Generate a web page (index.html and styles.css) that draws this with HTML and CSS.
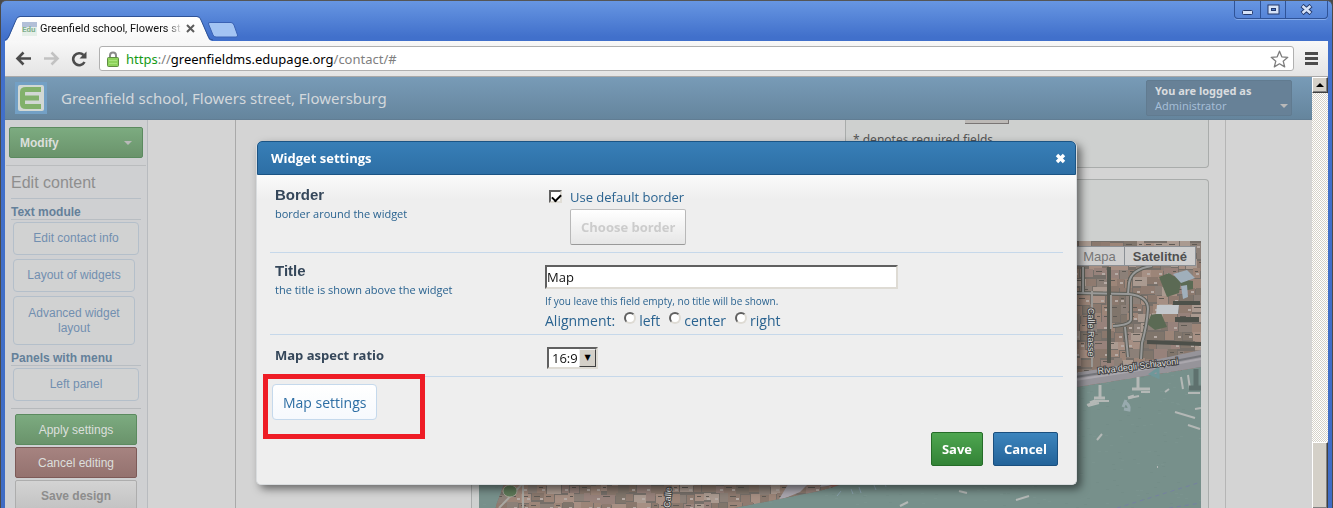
FILE: index.html
```html
<!DOCTYPE html>
<html lang="en">
<head>
    <meta charset="UTF-8">
    <meta name="viewport" content="width=device-width, initial-scale=1.0">
    <title>Greenfield school, Flowers street, Flowersburg</title>
    <link rel="stylesheet" href="styles.css">
</head>
<body>
    <div class="window">
        <div class="titlebar">
            <div class="tab">
                <svg class="tab-shape" viewBox="0 0 208 25" preserveAspectRatio="none">
                    <defs>
                        <linearGradient id="tabFill" x1="0" y1="0" x2="0" y2="1">
                            <stop offset="0" stop-color="#ffffff"/>
                            <stop offset="1" stop-color="#f7f7f7"/>
                        </linearGradient>
                    </defs>
                    <path d="M0 25 Q3 24 4 21 L11 4 Q12 1 15 1 H192 Q195 1 196 4 L203 21 Q204 25 208 25 Z" fill="url(#tabFill)"/>
                    <path d="M0 24 Q3 23 4 20 L11 4 Q12 .5 15 .5 H192 Q195 .5 196 4 L203 20 Q204 24 208 24" fill="none" stroke="#2f5397" stroke-width="1"/>
                </svg>
                <span class="favicon">Edu</span>
                <span class="tab-title">Greenfield school, Flowers st</span>
                <button class="tab-close" aria-label="Close tab">
                    <svg width="9" height="9" viewBox="0 0 9 9"><path d="M1 1l7 7M8 1l-7 7" stroke="#5c5c5c" stroke-width="2"/></svg>
                </button>
            </div>
            <button class="new-tab" aria-label="New tab">
                <svg width="32" height="16" viewBox="0 0 32 16"><path d="M3 .5H24Q26 .5 27 3L30.500 13Q31 15 29 15H9Q7 15 6 13L1.500 2Q1 .5 3 .5Z" fill="#a3c4f3" stroke="#3a62b4"/></svg>
            </button>
            <div class="window-buttons">
                <button aria-label="Minimize"><svg width="13" height="11" viewBox="0 0 13 11"><rect x="1.500" y="6.500" width="10" height="4" rx="1" fill="#d6e3f8" stroke="#24396b"/></svg></button>
                <button aria-label="Maximize"><svg width="13" height="11" viewBox="0 0 13 11"><rect x="1" y="1" width="11" height="9" fill="#d6e3f8" stroke="#24396b"/><rect x="4.500" y="4.500" width="4" height="2" fill="#4876cc" stroke="#24396b"/></svg></button>
                <button class="wide" aria-label="Close"><svg width="13" height="11" viewBox="0 0 13 11"><path d="M2 1.500l9 8M11 1.500l-9 8" stroke="#24396b" stroke-width="4.500"/><path d="M2.500 2l8 7M10.500 2l-8 7" stroke="#d6e3f8" stroke-width="2.500"/></svg></button>
            </div>
        </div>

        <div class="toolbar">
            <button class="nav-btn" aria-label="Back"><svg width="17" height="15" viewBox="0 0 17 15"><path d="M16 7.500H3M8.500 1.500L2.500 7.500l6 6" fill="none" stroke="#4c4c4c" stroke-width="2.600"/></svg></button>
            <button class="nav-btn" aria-label="Forward"><svg width="17" height="15" viewBox="0 0 17 15"><path d="M1 7.500h13M8.500 1.500l6 6-6 6" fill="none" stroke="#c2c2c2" stroke-width="2.600"/></svg></button>
            <button class="nav-btn" aria-label="Reload"><svg width="17" height="16" viewBox="0 0 17 16"><path d="M13.500 11A6 6 0 1 1 12.500 4" fill="none" stroke="#4c4c4c" stroke-width="2.600"/><path d="M15.500 .5V7.500H8.500Z" fill="#4c4c4c"/></svg></button>
            <div class="address">
                <svg class="lock" width="12" height="16" viewBox="0 0 12 16"><path d="M3 7V4.500a3 3 0 0 1 6 0V7" fill="none" stroke="#8a8a8a" stroke-width="2"/><rect x=".5" y="6.500" width="11" height="9" rx="1" fill="#8ed35c" stroke="#5f8d42"/><path d="M2 9.500h8M2 12.500h8" stroke="#a8e37c"/></svg>
                <span class="url"><span class="scheme">https</span><span class="dim">://</span>greenfieldms.edupage.org<span class="dim">/contact/#</span></span>
                <svg width="19" height="18" viewBox="0 0 19 18"><path d="M9.500 1.200l2.300 5.600 6 .5-4.600 3.900 1.500 5.700-5.200-3.100-5.200 3.100 1.500-5.700L1.200 7.300l6-.5z" fill="#fff" stroke="#7d7d7d" stroke-width="1.300" stroke-linejoin="round"/></svg>
            </div>
            <button class="menu-btn" aria-label="Menu"><svg width="13" height="13" viewBox="0 0 13 13"><path d="M0 1.500h13M0 6.500h13M0 11.500h13" stroke="#4c4c4c" stroke-width="3"/></svg></button>
        </div>

        <div class="viewport">
            <div class="page">
                <div class="header">
                    <svg class="logo" width="32" height="32" viewBox="0 0 32 32"><rect width="32" height="32" fill="#73a0c5"/><rect x="3" y="3" width="26" height="26" rx="2" fill="#d2d8d4"/><path d="M26 7.500H11Q7.500 7.500 7.500 10V22Q7.500 24.500 11 24.500H26M8 16H24" fill="none" stroke="#82b16b" stroke-width="5"/></svg>
                    <h1>Greenfield school, Flowers street, Flowersburg</h1>
                    <div class="login-box">
                        <strong>You are logged as</strong>
                        <span>Administrator</span>
                        <i class="caret"></i>
                    </div>
                </div>

                <div class="columns">
                    <div class="sidebar">
                        <button class="side-btn modify">Modify <i class="caret"></i></button>
                        <div class="side-panel">
                            <h2>Edit content</h2>
                            <h3>Text module</h3>
                            <button class="side-link full">Edit contact info</button>
                            <button class="side-link">Layout of widgets</button>
                            <button class="side-link tall">Advanced widget layout</button>
                            <h3>Panels with menu</h3>
                            <button class="side-link full">Left panel</button>
                            <div class="side-actions">
                                <button class="side-btn green">Apply settings</button>
                                <button class="side-btn red">Cancel editing</button>
                                <button class="side-btn grey">Save design</button>
                            </div>
                        </div>
                    </div>

                    <div class="main">
                        <div class="content">
                            <div class="card form-card">
                                <span class="field-end"></span>
                                <p>* denotes required fields</p>
                            </div>
                            <div class="card map-card">
                                <div class="map">
                                    <svg class="map-image" viewBox="0 0 722 330" preserveAspectRatio="xMaxYMin slice">
                                        <defs>
                                            <clipPath id="land">
                                                <path d="M8 0H722V126L598 146L470 195L372 241L340 250L250 268L180 330H0L18 262L30 230Z"/>
                                            </clipPath>
                                        </defs>
                                        <rect width="722" height="330" fill="#77908b"/>
                                        <g id="ripples"></g>
                                        <g clip-path="url(#land)">
                                            <rect width="722" height="330" fill="#766f69"/>
                                            <g id="roofs"></g>
                                            <path d="M20 267L48 238M44 238V267" stroke="#a9a8a2" stroke-width="2" fill="none"/>
                                            <ellipse cx="31" cy="250" rx="7" ry="6" fill="#5f7a59" stroke="#a3a496"/>
                                            <path d="M311 240l20 1-10 10-22 9zM345 238l18-2-8 8-14 2z" fill="#aaa6ae"/>
                                            <path d="M346 242l12-4 10 2-14 6z" fill="#9b6258"/>
                                            <g fill="#5b6a54">
                                                <path d="M680 36l10-4 12 8-2 12-12 4zM672 74l10-2 6 14-12 3-8-6zM700 38l14 2v8l-10 2z"/>
                                                <path d="M694 60h27v4h-27zM696 76h24v5h-24z" fill="#4d514a"/>
                                            </g>
                                            <path d="M678 64h22l-1 9h-22z" fill="#c3c7cb"/>
                                            <path d="M694 33l14-4 8 8-14 5zM702 45l6-1 1 12-5 2z" fill="#a0afbb"/>
                                            <g fill="none" stroke-linejoin="round">
                                                <path d="M598 52L650 53Q669 55 669 68Q668 84 663 102L662 118M673 25Q652 28 650 42L649 53M652 55L652 78Q652 84 634 85M604 26V52M646 86L649 116" stroke="#5d5e57" stroke-width="4"/>
                                                <path d="M598 52L650 53Q669 55 669 68Q668 84 663 102L662 118M673 25Q652 28 650 42L649 53M652 55L652 78Q652 84 634 85M604 26V52M646 86L649 116" stroke="#999a99" stroke-width="2"/>
                                                <path d="M630 26V122" stroke="#555850" stroke-width="4"/>
                                                <path d="M613 50V126M632 54V88" stroke="#9a9894" stroke-width="2"/>
                                                <path d="M668 101L722 103" stroke="#4c4f49" stroke-width="4"/>
                                            </g>
                                            <path d="M590 133L680 118L722 109V130L598 149Z" fill="#96949a"/>
                                            <path d="M590 137L680 123L722 115" fill="none" stroke="#74757a" stroke-width="2"/>
                                            <path d="M590 140L680 126L722 118" fill="none" stroke="#aaa7ad" stroke-width="2"/>
                                        </g>
                                        <g stroke="#b4b8b6" stroke-width="3" fill="none">
                                            <path d="M621 144V156M615 157h11M616 160l-5 2M659 136v11M653 148h18M655 155l-6 2"/>
                                            <path d="M614 160h16M662 151h9M609 165l11-3M650 157l10-2M702 136l2 12M709 134l2 14" stroke-width="2"/>
                                            <path d="M717 128v18M710 147h12" stroke="#5e716e" stroke-width="5"/>
                                            <path d="M686 151l4-3M709 152h12M709 184l12 4M716 168l6-1M696 171l20 6M618 199l5-6M608 164l12-4" stroke-width="2"/>
                                            <path d="M672 133l7-5v8z" stroke="#6f979a"/>
                                            <path d="M645 161q6 2 5 8l-5-1M647 159l-3 7" stroke="#98aaae"/>
                                            <path d="M537 259l13-4M421 265l8-4M480 250l8 2M678 226h1" stroke-width="2"/>
                                        </g>
                                        <g stroke="#8ba3b0" fill="none"><path d="M372 248l2 5M380 246l2 6M395 244l2 5M362 250l-4 5M406 242l1 4"/></g>
                                        <path d="M638 267L722 241M690 267L722 262" stroke="#7581a0" stroke-dasharray="4 4" fill="none"/>
                                        <g class="street">
                                            <text x="619" y="133" transform="rotate(-7 619 133)">Riva degli Schiavoni</text>
                                            <text x="609" y="67" transform="rotate(90 609 67)">Calle Rasse</text>
                                            <text x="191" y="267" transform="rotate(-85 191 267)">Calle</text>
                                        </g>
                                    </svg>
                                    <div class="map-types">
                                        <button>Mapa</button>
                                        <button class="active">Satelitné</button>
                                    </div>
                                </div>
                            </div>
                        </div>
                    </div>
                </div>
            </div>
            <div class="scrollbar">
                <button class="scroll-up" aria-label="Scroll up"></button>
                <div class="scroll-thumb"></div>
            </div>
        </div>
    </div>

    <div class="overlay">
        <div class="dialog" role="dialog" aria-labelledby="dialogTitle">
            <div class="dialog-title">
                <h2 id="dialogTitle">Widget settings</h2>
                <button class="dialog-close" aria-label="Close">
                    <svg width="11" height="11" viewBox="0 0 11 11"><path d="M2 2l7 7M9 2l-7 7" stroke="#fff" stroke-width="3.400"/></svg>
                </button>
            </div>
            <form class="dialog-body" onsubmit="return false">
                <div class="row">
                    <div class="row-label">
                        <h4>Border</h4>
                        <p>border around the widget</p>
                    </div>
                    <div class="row-field">
                        <div class="check-line">
                            <input type="checkbox" id="default-border" checked>
                            <label for="default-border">Use default border</label>
                        </div>
                        <button type="button" class="btn btn-disabled" disabled>Choose border</button>
                    </div>
                </div>
                <div class="row row-title">
                    <div class="row-label">
                        <h4><label for="widget-title">Title</label></h4>
                        <p>the title is shown above the widget</p>
                    </div>
                    <div class="row-field title-field">
                        <input type="text" id="widget-title" value="Map">
                        <small>If you leave this field empty, no title will be shown.</small>
                        <div class="align-line">
                            <span>Alignment:</span>
                            <input type="radio" name="align" id="align-left"><label for="align-left">left</label>
                            <input type="radio" name="align" id="align-center"><label for="align-center">center</label>
                            <input type="radio" name="align" id="align-right"><label for="align-right">right</label>
                        </div>
                    </div>
                </div>
                <div class="row">
                    <div class="row-label">
                        <h4 class="small"><label for="aspect">Map aspect ratio</label></h4>
                    </div>
                    <div class="row-field ratio-field">
                        <span class="select-box">
                            <select id="aspect"><option>16:9</option><option>4:3</option></select>
                        </span>
                    </div>
                </div>
                <div class="highlight">
                    <button type="button" class="btn btn-light">Map settings</button>
                </div>
                <div class="dialog-buttons">
                    <button type="submit" class="btn btn-save">Save</button>
                    <button type="button" class="btn btn-cancel">Cancel</button>
                </div>
            </form>
        </div>
    </div>

    <script src="map.js"></script>
</body>
</html>
```
FILE: styles.css
```css
* {
    margin: 0;
    padding: 0;
    box-sizing: border-box;
}

body {
    font-family: "Liberation Sans", Arial, sans-serif;
    font-size: 12px;
    background: #4a4a4a;
    overflow: hidden;
}

button,
input,
select {
    font: inherit;
}

button {
    border: none;
    background: none;
}

svg {
    display: block;
}

/* browser window */
.window {
    height: 100vh;
    display: flex;
    flex-direction: column;
    padding: 0 4px;
    background: linear-gradient(to bottom, #6796e2, #4170cb 36px, #3f6cc4);
    border-top: 1px solid #555;
    border-left: 1px solid #4a4a4a;
    border-right: 1px solid #4a4a4a;
    border-radius: 6px 6px 0 0;
}

.titlebar {
    height: 40px;
    display: flex;
    align-items: flex-end;
}

.tab {
    position: relative;
    width: 208px;
    height: 25px;
    display: flex;
    align-items: center;
    padding: 0 18px 0 17px;
    gap: 3px;
    font-family: Roboto, sans-serif;
    font-size: 11px;
}

.tab-shape {
    position: absolute;
    inset: 0;
    width: 100%;
    height: 100%;
}

.favicon {
    position: relative;
    width: 15px;
    height: 14px;
    background: linear-gradient(to bottom, #b3c0d8 5px, #e6efe9 5px);
    color: #7fae8c;
    font-size: 8px;
    font-weight: bold;
    line-height: 16px;
}

.tab-title {
    position: relative;
    flex: 1;
    overflow: hidden;
    white-space: nowrap;
    color: #111;
    mask-image: linear-gradient(to right, #000 88%, transparent);
}

.tab-close {
    position: relative;
}

.new-tab {
    margin: 0 0 3px -6px;
}

.window-buttons {
    align-self: flex-start;
    display: flex;
    margin-left: auto;
    border: 1px solid #2f5397;
    border-top: none;
    border-radius: 0 0 4px 4px;
    box-shadow: 0 1px 0 #86abea;
}

.window-buttons button {
    width: 25px;
    height: 17px;
    display: flex;
    align-items: center;
    justify-content: center;
    border-left: 1px solid #2f5397;
}

.window-buttons button:first-child {
    border-left: none;
}

.window-buttons .wide {
    width: 42px;
}

.toolbar {
    height: 36px;
    display: flex;
    align-items: center;
    gap: 11px;
    padding: 0 10px;
    background: linear-gradient(to bottom, #f8f8f8, #e4e4e4);
    border-bottom: 1px solid #a9a9a9;
}

.address {
    flex: 1;
    height: 25px;
    display: flex;
    align-items: center;
    gap: 7px;
    padding: 0 4px 0 7px;
    background: #fff;
    border: 1px solid #b0b0b0;
    border-radius: 3px;
}

.url {
    flex: 1;
    font-family: "Noto Sans", sans-serif;
    font-size: 13px;
    color: #000;
}

.scheme {
    color: #159a15;
}

.dim {
    color: #7f7f7f;
}

.viewport {
    flex: 1;
    min-height: 0;
    display: flex;
}

/* school page */
.page {
    flex: 1;
    display: flex;
    flex-direction: column;
    overflow: hidden;
    background: #d4d4d4;
}

.header {
    flex: none;
    height: 43px;
    display: flex;
    align-items: center;
    gap: 14px;
    padding: 0 20px 0 10px;
    background: linear-gradient(to bottom, #789bb7, #65859d);
    border-bottom: 1px solid #617d93;
}

.header h1 {
    flex: 1;
    font-family: "Noto Sans", sans-serif;
    font-size: 15px;
    font-weight: normal;
    color: #d3d8dc;
}

.login-box {
    position: relative;
    width: 146px;
    height: 36px;
    padding: 2px 8px;
    display: flex;
    flex-direction: column;
    background: #678197;
    border: 1px solid #617b90;
    border-radius: 2px;
    font-family: "Noto Sans", sans-serif;
    font-size: 11px;
    line-height: 15px;
    color: #a5bdd6;
}

.login-box strong {
    color: #d9dcdf;
}

.caret {
    border: 4px solid transparent;
    border-top-color: #b9b9b9;
    border-bottom: none;
}

.login-box .caret {
    position: absolute;
    right: 3px;
    bottom: 7px;
}

.columns {
    flex: 1;
    min-height: 0;
    display: flex;
}

.sidebar {
    flex: none;
    width: 143px;
    padding: 7px 1px 0 1px;
    background: #cfd0d2;
    border-right: 1px solid #b8bbbf;
}

.side-btn {
    display: block;
    width: 100%;
    height: 31px;
    border: 1px solid #5b8a5f;
    border-radius: 2px;
    background: linear-gradient(to bottom, #7cab80, #6a936b);
    color: #dcdfdc;
}

.modify {
    width: 134px;
    display: flex;
    align-items: center;
    justify-content: space-between;
    margin: 0 3px 7px;
    padding: 0 10px;
    font-weight: bold;
}

.side-panel {
    border-top: 1px solid #babcbe;
    padding: 0 5px;
}

.side-panel h2 {
    height: 33px;
    line-height: 33px;
    font-size: 16px;
    font-weight: normal;
    color: #8e8e8e;
    border-bottom: 1px solid #b6bec6;
}

.side-panel h3 {
    height: 21px;
    padding-top: 5px;
    line-height: 16px;
    font-size: 12px;
    color: #64809a;
    border-bottom: 1px solid #b8bdc2;
    margin-bottom: -2px;
}

.side-link {
    display: block;
    width: 122px;
    min-height: 33px;
    margin: 4px 2px 0;
    padding: 0 12px;
    line-height: 15px;
    color: #718fb0;
    background: #d1d2d2;
    border: 1px solid #b4bfca;
    border-radius: 4px;
}

.side-link.tall {
    min-height: 49px;
}

.side-link.full {
    width: 126px;
}

.side-actions {
    display: flex;
    flex-direction: column;
    gap: 2px;
    margin-top: 7px;
    padding: 5px 4px 0;
    border-top: 1px solid #b6b9bc;
}

.side-btn.red {
    border-color: #7d5a58;
    background: linear-gradient(to bottom, #a68380, #94726f);
}

.side-btn.grey {
    border-color: #adadad;
    background: linear-gradient(to bottom, #d3d3d3, #c2c2c2);
    color: #8d8d8d;
    font-weight: bold;
}

.main {
    flex: 1;
    min-width: 0;
    padding: 0 86px 0 87px;
}

.content {
    height: 100%;
    display: flex;
    flex-direction: column;
    align-items: flex-end;
    gap: 11px;
    padding-right: 16px;
    border-left: 1px solid #a9a9a9;
    border-right: 1px solid #b5b5b5;
    overflow: hidden;
}

.card {
    background: #ced0cf;
    border: 1px solid #a9acab;
    border-radius: 4px;
}

.form-card {
    flex: none;
    width: 364px;
    height: 48px;
    padding-left: 7px;
    border-top: none;
    border-radius: 0 0 4px 4px;
    color: #555;
}

.form-card p {
    padding-top: 7px;
    font-size: 12px;
    font-family: "Noto Sans", sans-serif;
}

.field-end {
    display: block;
    width: 44px;
    height: 4px;
    margin-left: 112px;
    background: #bcb9b6;
    border: solid #7a7675;
    border-width: 0 1px 1px 0;
}

.map-card {
    flex: 1;
    width: 738px;
    min-height: 0;
    padding: 61px 7px 0;
    border-bottom: none;
    border-radius: 4px 4px 0 0;
}

.map {
    position: relative;
    height: 100%;
    overflow: hidden;
}

.map-image {
    width: 100%;
    height: 330px;
}

.street text {
    font-size: 9px;
    fill: #dcdcdc;
    stroke: #444;
    stroke-width: 2px;
    paint-order: stroke;
}

.map-types {
    position: absolute;
    top: 5px;
    right: 5px;
    display: flex;
    font-size: 13px;
}

.map-types button {
    height: 20px;
    padding: 0 8px;
    background: #cfcfcf;
    border: 1px solid #8b9095;
    color: #777;
}

.map-types .active {
    margin-left: -1px;
    font-weight: bold;
    color: #505050;
}

.scrollbar {
    flex: none;
    width: 16px;
    display: flex;
    flex-direction: column;
    justify-content: space-between;
    background: repeating-conic-gradient(#d6d2c9 0 25%, #fff 0 50%) 0 0 / 2px 2px;
}

.scroll-up,
.scroll-thumb {
    background: #d4d0c8;
    border: 1px solid;
    border-color: #fff #404040 #404040 #fff;
    box-shadow: inset -1px -1px 0 #808080;
}

.scroll-up {
    height: 16px;
}

.scroll-up::before {
    content: "";
    display: block;
    width: 0;
    margin: 0 auto;
    border: 4px solid transparent;
    border-top: none;
    border-bottom-color: #000;
}

.scroll-thumb {
    height: 66px;
    border-bottom: none;
}

/* dialog */
.overlay {
    position: fixed;
    inset: 0;
    display: flex;
    justify-content: center;
    align-items: flex-start;
    padding-top: 141px;
}

.dialog {
    width: 821px;
    background: #eee;
    border: 1px solid #d9dcde;
    border-top: none;
    border-radius: 6px 6px 5px 5px;
    box-shadow: 4px 4px 8px rgba(0, 0, 0, 0.5);
    font-family: "Open Sans", sans-serif;
    font-size: 13px;
    color: #2a6390;
}

.dialog-title {
    height: 34px;
    display: flex;
    align-items: center;
    justify-content: space-between;
    padding: 0 9px 0 13px;
    background: linear-gradient(to bottom, #387fb7, #2d6fa5);
    border: 1px solid #1b5484;
    border-radius: 5px 5px 0 0;
    color: #fff;
}

.dialog-title h2 {
    font-size: 13px;
}

.dialog-body {
    padding: 0 13px 18px;
    background: linear-gradient(to bottom, #fafafa, #eee 24px);
    border-radius: 0 0 5px 5px;
}

.row {
    display: grid;
    grid-template-columns: 275px 1fr;
    padding: 10px 0 7px;
    border-bottom: 1px solid #c6d8ea;
}

.row-title {
    padding: 8px 0 3px;
}

.row-label {
    padding-left: 5px;
}

.row-label h4 {
    font-family: "Liberation Sans", Arial, sans-serif;
    font-size: 15px;
    line-height: 20px;
    color: #35475a;
}

.row-label h4.small {
    font-family: inherit;
    font-size: 13px;
}

.row-label p {
    font-size: 11px;
    line-height: 18px;
}

.check-line {
    display: flex;
    align-items: center;
    gap: 8px;
    height: 24px;
    padding-left: 4px;
}

.check-line input {
    appearance: none;
    width: 13px;
    height: 13px;
    margin-bottom: 2px;
    background: #fff;
    border: 2px solid;
    border-color: #606060 #e0ddd6 #e0ddd6 #606060;
}

.check-line input:checked::before {
    content: "";
    display: block;
    width: 7px;
    height: 4px;
    margin: 2px 0 0 1px;
    border: solid #000;
    border-width: 0 0 2px 2px;
    transform: rotate(-45deg);
}

.btn {
    height: 34px;
    padding: 0 10px;
    border: 1px solid;
    border-radius: 2px;
    font-weight: bold;
}

.btn-disabled {
    height: 36px;
    margin-left: 25px;
    background: linear-gradient(to bottom, #fff, #e6e6e6);
    border-color: #c0c0c0 #b8b8b8 #999;
    color: #ccc;
}

.title-field {
    display: flex;
    flex-direction: column;
    align-items: flex-start;
    padding-top: 4px;
}

.title-field input[type="text"] {
    width: 353px;
    height: 24px;
    background: #fff;
    border: 2px solid;
    border-color: #606060 #dedbd4 #dedbd4 #606060;
    color: #111;
}

.title-field small {
    margin-top: 4px;
    font-size: 10px;
    line-height: 16px;
}

.align-line {
    display: flex;
    align-items: center;
    height: 22px;
    font-size: 14px;
}

.align-line input {
    appearance: none;
    width: 12px;
    height: 12px;
    margin: 0 3px 5px 9px;
    background: #fff;
    border: 2px solid;
    border-color: #606060 #dedbd4 #dedbd4 #606060;
    border-radius: 50%;
}

.ratio-field {
    padding: 2px 0 0 2px;
}

.select-box {
    position: relative;
    display: block;
    width: 51px;
    height: 22px;
    border: 2px solid;
    border-color: #606060 #dedbd4 #dedbd4 #606060;
}

.select-box select {
    appearance: none;
    display: block;
    width: 100%;
    height: 100%;
    padding: 0 0 0 3px;
    background: #fff;
    border: none;
    border-radius: 0;
    color: #111;
}

.select-box::after {
    content: "▼";
    position: absolute;
    top: 0;
    right: 0;
    bottom: 0;
    width: 15px;
    background: #d4d0c8;
    border: 1px solid;
    border-color: #eee #404040 #404040 #eee;
    color: #000;
    font-family: "DejaVu Sans", sans-serif;
    font-size: 8px;
    line-height: 16px;
    text-align: center;
    pointer-events: none;
}

/* marks the button to click */
.highlight {
    position: relative;
    width: 162px;
    height: 65px;
    margin: -3px 0 0 -7px;
    padding: 5px 4px;
    border: 5px solid #ee1c25;
}

.btn-light {
    height: 36px;
    background: linear-gradient(to bottom, #fff, #f6f9fd);
    border-color: #c5d9ec;
    border-radius: 4px;
    font-size: 14px;
    font-weight: normal;
    color: #2d6ea4;
}

.dialog-buttons {
    display: flex;
    justify-content: flex-end;
    gap: 10px;
    padding-right: 5px;
    margin-top: -7px;
}

.btn-save {
    background: linear-gradient(to bottom, #4ea650, #338336);
    border-color: #256c28;
    color: #fff;
}

.btn-cancel {
    background: linear-gradient(to bottom, #3d85bd, #236399);
    border-color: #1a4f7e;
    color: #fff;
}
```
FILE: map.js
```js
// draws the roofs and the ripples of the satellite map
const SVG_NS = 'http://www.w3.org/2000/svg';
const roofs = document.getElementById('roofs');
const ripples = document.getElementById('ripples');
const roofColors = ['#9c8578', '#8f7b70', '#a68f83', '#8a786d', '#97827b', '#8c8078', '#aa9a90', '#80756b'];
let seed = 7;

function rand() {
    seed = (seed * 16807) % 2147483647;
    return seed / 2147483647;
}

function addRect(parent, x, y, w, h, fill) {
    const rect = document.createElementNS(SVG_NS, 'rect');
    rect.setAttribute('x', x);
    rect.setAttribute('y', y);
    rect.setAttribute('width', w);
    rect.setAttribute('height', h);
    rect.setAttribute('fill', fill);
    parent.appendChild(rect);
}

for (let y = 0; y < 290; y += 9) {
    let x = 0;
    while (x < 722) {
        const w = 6 + Math.floor(rand() * 9);
        const h = 7 + Math.floor(rand() * 4);
        const color = roofColors[Math.floor(rand() * roofColors.length)];
        addRect(roofs, x, y + Math.floor(rand() * 3), w, h, color);
        if (rand() > 0.6) {
            addRect(roofs, x + 2, y + 3, Math.floor(w / 2), 1, '#5f5a54');
        }
        if (rand() > 0.6) {
            addRect(roofs, x + w - 4, y + 5, 3, 2, '#b5aaa4');
        }
        x += w + Math.floor(rand() * 2);
    }
}

for (let i = 0; i < 900; i++) {
    addRect(ripples, Math.floor(rand() * 722), Math.floor(130 + rand() * 200), 3, 1, rand() > 0.5 ? '#7a938e' : '#748d88');
}
```
